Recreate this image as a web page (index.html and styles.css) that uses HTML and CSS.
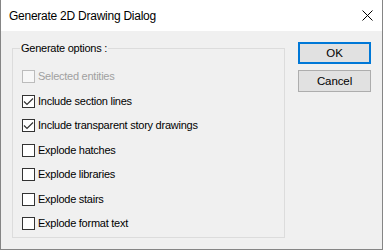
FILE: index.html
```html
<!DOCTYPE html>
<html lang="en">
<head>
    <meta charset="UTF-8">
    <title>Generate 2D Drawing Dialog</title>
    <link rel="stylesheet" href="styles.css">
</head>
<body>
    <div class="window">
        <div class="titlebar">
            <span class="title">Generate 2D Drawing Dialog</span>
            <svg class="close" width="11" height="11" viewBox="0 0 11 11">
                <path d="M0.5 0.5 L10.5 10.5 M10.5 0.5 L0.5 10.5" stroke="#000" stroke-width="1" fill="none"/>
            </svg>
        </div>
        <div class="content">
            <div class="group">
                <span class="group-label">Generate options :</span>
                <div class="check disabled">
                    <span class="box"></span>
                    <span class="text">Selected entities</span>
                </div>
                <div class="check">
                    <span class="box checked">
                        <svg width="11" height="11" viewBox="0 0 11 11"><path d="M1 5.5 L4 8.5 L10 2.5" stroke="#333" stroke-width="1.2" fill="none"/></svg>
                    </span>
                    <span class="text">Include section lines</span>
                </div>
                <div class="check">
                    <span class="box checked">
                        <svg width="11" height="11" viewBox="0 0 11 11"><path d="M1 5.5 L4 8.5 L10 2.5" stroke="#333" stroke-width="1.2" fill="none"/></svg>
                    </span>
                    <span class="text">Include transparent story drawings</span>
                </div>
                <div class="check">
                    <span class="box"></span>
                    <span class="text">Explode hatches</span>
                </div>
                <div class="check">
                    <span class="box"></span>
                    <span class="text">Explode libraries</span>
                </div>
                <div class="check">
                    <span class="box"></span>
                    <span class="text">Explode stairs</span>
                </div>
                <div class="check">
                    <span class="box"></span>
                    <span class="text">Explode format text</span>
                </div>
            </div>
            <div class="buttons">
                <button class="btn default">OK</button>
                <button class="btn">Cancel</button>
            </div>
        </div>
    </div>
</body>
</html>
```

FILE: styles.css
```css
body {
    margin: 0;
    padding: 0;
    font-family: 'Liberation Sans', Arial, sans-serif;
    font-size: 11px;
    letter-spacing: -0.25px;
    color: #000;
    background: #fff;
}
.window {
    width: 383px;
    height: 250px;
    box-sizing: border-box;
    border: 1px solid #858585;
    border-top: none;
    display: flex;
    flex-direction: column;
}
.titlebar {
    height: 31px;
    background: #fff;
    display: flex;
    align-items: center;
    padding-left: 8px;
    position: relative;
}
.title {
    font-size: 12px;
    padding-top: 1px;
}
.close {
    position: absolute;
    left: 361px;
    top: 10px;
}
.content {
    flex: 1;
    background: #f0f0f0;
    display: flex;
    align-items: flex-start;
    padding-left: 11px;
}
.group {
    position: relative;
    margin-top: 17px;
    width: 273px;
    height: 190px;
    box-sizing: border-box;
    border: 1px solid #dcdcdc;
    padding: 21px 0 0 9px;
    display: flex;
    flex-direction: column;
    gap: 11.5px;
}
.group-label {
    position: absolute;
    top: -8px;
    left: 7px;
    padding: 0 1px;
    background: #f0f0f0;
    line-height: 14px;
}
.check {
    display: flex;
    align-items: center;
    height: 13px;
}
.box {
    width: 13px;
    height: 13px;
    box-sizing: border-box;
    border: 1px solid #333;
    background: #fff;
    display: flex;
    align-items: center;
    justify-content: center;
}
.text {
    margin-left: 3px;
    line-height: 13px;
}
.disabled .box {
    border-color: #bcbcbc;
    background: #f7f7f7;
}
.disabled .text {
    color: #a0a0a0;
}
.buttons {
    margin-top: 11px;
    margin-left: 13px;
    display: flex;
    flex-direction: column;
    gap: 6px;
}
.btn {
    width: 73px;
    height: 22px;
    box-sizing: border-box;
    border: 1px solid #adadad;
    background: #e1e1e1;
    font-family: 'Liberation Sans', Arial, sans-serif;
    font-size: 11.5px;
    letter-spacing: -0.1px;
    color: #000;
    padding: 0;
}
.btn.default {
    border: 2px solid #0078d7;
}
```
